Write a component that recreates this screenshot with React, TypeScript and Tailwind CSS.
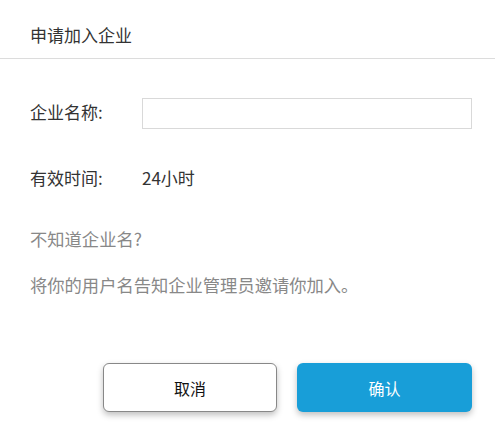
import React from 'react';

export default function App() {
  return (
    <div
      className="w-[495px] h-[429px] bg-white text-[#333]"
      style={{ fontFamily: '"Microsoft YaHei", "Noto Sans CJK SC", sans-serif' }}
    >
      {/* Header */}
      <div className="h-[59px] border-b border-[#dcdcdc] pt-[11px] px-[30px] flex items-center">
        <span className="text-[17px]">申请加入企业</span>
      </div>

      <div className="pl-[30px]">
        {/* Company name */}
        <div className="mt-[39px] h-[31px] flex items-center">
          <span className="w-[112px] text-[17px] pb-[4px]">企业名称:</span>
          <input
            type="text"
            className="w-[330px] h-[31px] border border-[#d9d9d9] outline-none px-2 text-[15px]"
          />
        </div>

        {/* Valid time */}
        <div className="mt-[33px] h-[31px] flex items-center">
          <span className="w-[112px] text-[17px]">有效时间:</span>
          <span className="text-[17px]">24小时</span>
        </div>

        <div className="mt-[34px] h-[24px] flex items-center text-[17.3px] text-[#888]">
          不知道企业名?
        </div>
        <div className="mt-[22px] h-[24px] flex items-center text-[17.3px] text-[#888]">
          将你的用户名告知企业管理员邀请你加入。
        </div>
      </div>

      {/* Buttons */}
      <div className="mt-[66px] ml-[103px] flex gap-[20px]">
        <button className="w-[174px] h-[49px] rounded-[6px] border border-[#888] bg-white text-[16px] text-[#111] shadow-[0_3px_6px_rgba(0,0,0,0.25)]">
          取消
        </button>
        <button className="w-[175px] h-[49px] rounded-[6px] bg-[#189ed8] text-[16px] text-white shadow-[0_3px_6px_rgba(0,0,0,0.25)]">
          确认
        </button>
      </div>
    </div>
  );
}
